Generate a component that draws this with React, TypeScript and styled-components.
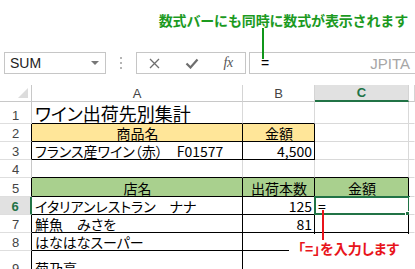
import React from "react";
import styled, { createGlobalStyle } from "styled-components";

const GlobalStyle = createGlobalStyle`
  html, body {
    margin: 0;
    padding: 0;
    background: #fff;
  }
  body {
    width: 415px;
    height: 269px;
    overflow: hidden;
    font-family: "Noto Sans CJK JP", sans-serif;
  }
`;

const GREEN = "#217346";
const GRID = "#d9d9d9";

type Edge = "grid" | "black" | "green" | "none";

const edgeColor = (e: Edge) =>
  e === "black" ? "#000" : e === "green" ? GREEN : e === "none" ? "transparent" : GRID;

const Page = styled.div`
  position: relative;
  width: 415px;
  height: 269px;
  overflow: hidden;
`;

const Banner = styled.div`
  height: 52px;
  box-sizing: border-box;
  padding: 12px 7px 0 0;
  display: flex;
  justify-content: flex-end;
  align-items: flex-start;
  font-size: 14px;
  font-weight: bold;
  line-height: 16px;
  letter-spacing: -0.15px;
  color: #1c9a1f;
`;

const FormulaBar = styled.div`
  display: flex;
  align-items: stretch;
  height: 22px;
  padding-left: 4px;
`;

const NameBox = styled.div`
  width: 102px;
  box-sizing: border-box;
  border: 1px solid #c6c6c6;
  display: flex;
  align-items: center;
  justify-content: space-between;
  padding: 0 6px 0 5px;
  font-family: "Liberation Sans", Arial, sans-serif;
  font-size: 14px;
  color: #222;
`;

const DropArrow = styled.span`
  width: 0;
  height: 0;
  border-left: 4px solid transparent;
  border-right: 4px solid transparent;
  border-top: 4px solid #777;
`;

const Grip = styled.div`
  width: 30px;
  display: flex;
  flex-direction: column;
  align-items: center;
  justify-content: center;
  gap: 3px;
`;

const GripDot = styled.span`
  width: 2px;
  height: 2px;
  background: #b5b5b5;
`;

const ButtonBox = styled.div`
  width: 110px;
  box-sizing: border-box;
  border: 1px solid #c6c6c6;
  display: flex;
  align-items: center;
  justify-content: space-around;
  color: #666;
`;

const Fx = styled.span`
  font-family: "Liberation Serif", "Times New Roman", serif;
  font-style: italic;
  font-size: 14px;
  color: #555;
  letter-spacing: -0.5px;
`;

const FormulaInput = styled.div`
  flex: 1;
  margin-left: 3px;
  border: 1px solid #c6c6c6;
  border-right: none;
  display: flex;
  align-items: center;
  justify-content: space-between;
  padding: 0 5px 0 11px;
  font-family: "Liberation Sans", Arial, sans-serif;
  font-size: 14px;
  color: #000;
`;

const Ghost = styled.span`
  font-size: 15px;
  color: #a6a6a6;
`;

const Sheet = styled.div`
  margin-top: 11px;
  display: grid;
  grid-template-columns: 32px 211px 72px 94px 1fr;
  grid-template-rows: 17px 22px 18px 18px 18px 19px 18px 18px 18px 26px;
`;

const Corner = styled.div`
  box-sizing: border-box;
  border-right: 1px solid #c8c8c8;
  border-bottom: 1px solid #c8c8c8;
  display: flex;
  justify-content: flex-end;
  align-items: flex-end;
  padding: 0 3px 3px 0;
`;

const CornerMark = styled.span`
  width: 0;
  height: 0;
  border-left: 10px solid transparent;
  border-bottom: 10px solid #dcdcdc;
`;

const ColHead = styled.div<{ $active?: boolean }>`
  box-sizing: border-box;
  border-right: 1px solid #d4d4d4;
  border-bottom: ${(p) => (p.$active ? `2px solid ${GREEN}` : "1px solid #c8c8c8")};
  background: ${(p) => (p.$active ? "#e1e1e1" : "#fff")};
  color: ${(p) => (p.$active ? GREEN : "#444")};
  font-weight: ${(p) => (p.$active ? "bold" : "normal")};
  font-family: "Liberation Sans", Arial, sans-serif;
  font-size: 13px;
  display: flex;
  align-items: center;
  justify-content: center;
`;

const RowHead = styled.div<{ $edge: Edge; $active?: boolean }>`
  box-sizing: border-box;
  border-right: ${(p) => (p.$active ? `2px solid ${GREEN}` : `1px solid ${p.$edge === "black" ? "#000" : "#c8c8c8"}`)};
  border-bottom: 1px solid #dedede;
  background: ${(p) => (p.$active ? "#e1e1e1" : "#fff")};
  color: ${(p) => (p.$active ? GREEN : "#444")};
  font-weight: ${(p) => (p.$active ? "bold" : "normal")};
  font-family: "Liberation Sans", Arial, sans-serif;
  font-size: 13px;
  display: flex;
  align-items: flex-end;
  justify-content: center;
  padding-bottom: 1px;
  line-height: 1;
`;

type CellProps = {
  $right?: Edge;
  $bottom?: Edge;
  $fill?: string;
  $align?: "left" | "center" | "right";
  $size?: number;
};

const Cell = styled.div<CellProps>`
  position: relative;
  box-sizing: border-box;
  min-width: 0;
  border-right: 1px solid ${(p) => edgeColor(p.$right ?? "grid")};
  border-bottom: 1px solid ${(p) => edgeColor(p.$bottom ?? "grid")};
  background: ${(p) => p.$fill ?? "#fff"};
  display: flex;
  align-items: flex-end;
  justify-content: ${(p) =>
    p.$align === "center" ? "center" : p.$align === "right" ? "flex-end" : "flex-start"};
  padding: 0 2px 1px 3px;
  font-size: ${(p) => p.$size ?? 14}px;
  line-height: 1;
  color: #000;
  white-space: nowrap;
  overflow: visible;
  font-feature-settings: "palt";
`;

const ActiveFrame = styled.span`
  position: absolute;
  top: -1px;
  left: -1px;
  right: -2px;
  bottom: -1px;
  border: 2px solid ${GREEN};
  pointer-events: none;
`;

const FillHandle = styled.span`
  position: absolute;
  right: -4px;
  bottom: -4px;
  width: 5px;
  height: 5px;
  background: ${GREEN};
  border: 1px solid #fff;
`;

const GreenPointer = styled.div`
  position: absolute;
  left: 262px;
  top: 28px;
  width: 2px;
  height: 31px;
  background: #10961a;
`;

const RedPointer = styled.div`
  position: absolute;
  left: 322px;
  top: 210px;
  width: 2px;
  height: 30px;
  background: #e8141b;
  z-index: 2;
`;

const Callout = styled.div`
  position: absolute;
  left: 289px;
  top: 234px;
  width: 126px;
  height: 35px;
  background: #fff;
  box-sizing: border-box;
  padding: 6px 0 0 9px;
  font-size: 14px;
  font-weight: bold;
  line-height: 16px;
  color: #e8141b;
  font-feature-settings: "palt";
  z-index: 1;
`;

const FILL_ORANGE = "#ffe699";
const FILL_GREEN = "#a9d08e";

const CloseIcon = () => (
  <svg width="11" height="11" viewBox="0 0 11 11">
    <path d="M1 1 L10 10 M10 1 L1 10" stroke="#6e6e6e" strokeWidth="1.3" fill="none" />
  </svg>
);

const CheckIcon = () => (
  <svg width="14" height="11" viewBox="0 0 14 11">
    <path d="M1.5 5.5 L5.5 9.5 L12.5 1.5" stroke="#6e6e6e" strokeWidth="2.2" fill="none" />
  </svg>
);

type TableRow = {
  n: number;
  a: string;
  b: string;
  c: string;
};

const listRows: TableRow[] = [
  { n: 7, a: "鮮魚　みさを", b: "81", c: "" },
  { n: 8, a: "はなはなスーパー", b: "", c: "" },
  { n: 9, a: "菊乃亭", b: "", c: "" },
];

export default function App() {
  return (
    <Page>
      <GlobalStyle />
      <Banner>数式バーにも同時に数式が表示されます</Banner>
      <FormulaBar>
        <NameBox>
          <span>SUM</span>
          <DropArrow />
        </NameBox>
        <Grip>
          <GripDot />
          <GripDot />
          <GripDot />
        </Grip>
        <ButtonBox>
          <CloseIcon />
          <CheckIcon />
          <Fx>fx</Fx>
        </ButtonBox>
        <FormulaInput>
          <span>=</span>
          <Ghost>JPITA</Ghost>
        </FormulaInput>
      </FormulaBar>

      <Sheet>
        <Corner>
          <CornerMark />
        </Corner>
        <ColHead>A</ColHead>
        <ColHead>B</ColHead>
        <ColHead $active>C</ColHead>
        <ColHead />

        <RowHead $edge="grid">1</RowHead>
        <Cell $size={18} $bottom="black">ワイン出荷先別集計</Cell>
        <Cell $bottom="black" />
        <Cell />
        <Cell $right="none" />

        <RowHead $edge="black">2</RowHead>
        <Cell $fill={FILL_ORANGE} $align="center" $right="black" $bottom="black">商品名</Cell>
        <Cell $fill={FILL_ORANGE} $align="center" $right="black" $bottom="black">金額</Cell>
        <Cell />
        <Cell $right="none" />

        <RowHead $edge="black">3</RowHead>
        <Cell $right="black" $bottom="black">フランス産ワイン（赤）　F01577</Cell>
        <Cell $align="right" $right="black" $bottom="black">4,500</Cell>
        <Cell />
        <Cell $right="none" />

        <RowHead $edge="grid">4</RowHead>
        <Cell $bottom="black" />
        <Cell $bottom="black" />
        <Cell $bottom="black" />
        <Cell $right="none" />

        <RowHead $edge="black">5</RowHead>
        <Cell $fill={FILL_GREEN} $align="center" $right="black" $bottom="black">店名</Cell>
        <Cell $fill={FILL_GREEN} $align="center" $right="black" $bottom="black">出荷本数</Cell>
        <Cell $fill={FILL_GREEN} $align="center" $right="black" $bottom="black">金額</Cell>
        <Cell $right="none" />

        <RowHead $edge="black" $active>6</RowHead>
        <Cell $right="black" $bottom="black">イタリアンレストラン　ナナ</Cell>
        <Cell $align="right" $right="black" $bottom="black">125</Cell>
        <Cell $right="black" $bottom="black">
          =
          <ActiveFrame />
          <FillHandle />
        </Cell>
        <Cell $right="none" />

        {listRows.map((r) => (
          <React.Fragment key={r.n}>
            <RowHead $edge="black">{r.n}</RowHead>
            <Cell $right="black" $bottom="black">{r.a}</Cell>
            <Cell $align="right" $right="black" $bottom="black">{r.b}</Cell>
            <Cell $right="black" $bottom="black">{r.c}</Cell>
            <Cell $right="none" />
          </React.Fragment>
        ))}
      </Sheet>

      <GreenPointer />
      <RedPointer />
      <Callout>「=」を入力します</Callout>
    </Page>
  );
}
